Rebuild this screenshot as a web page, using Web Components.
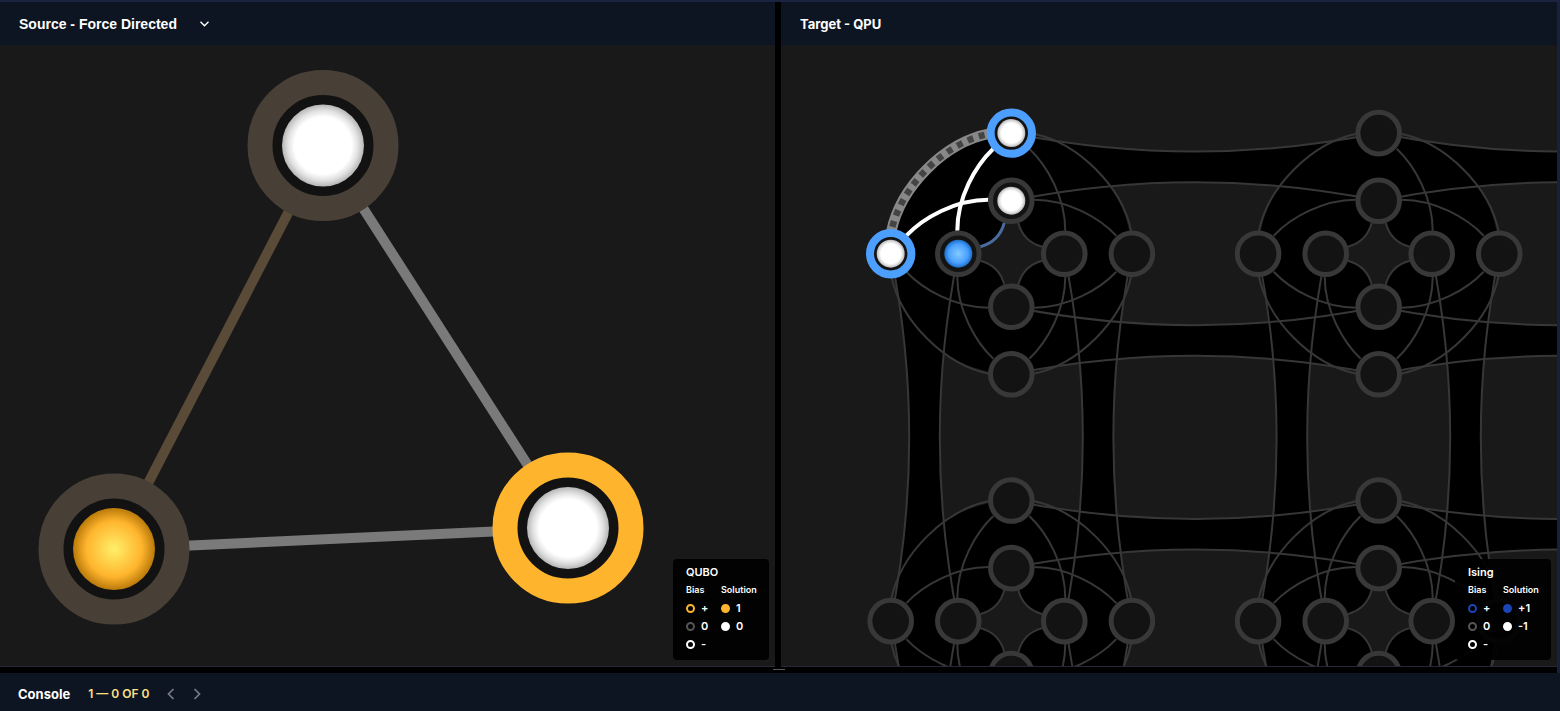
<!DOCTYPE html>
<html lang="en">
<head>
<meta charset="utf-8">
<title>Problem Inspector</title>
<style>
html, body { height: 100%; }
body { margin: 0; background: #000; color: #fff; font-family: Inter, "Liberation Sans", sans-serif; overflow: hidden; }
</style>
</head>
<body>
<inspector-app></inspector-app>
<script>
const make = (host, html) => {
  const t = document.createElement('template');
  t.innerHTML = html;
  host.attachShadow({ mode: 'open' }).append(t.content.cloneNode(true));
};

const ballDefs = `
  <radialGradient id="white"><stop offset="0" stop-color="#fff"/><stop offset=".7" stop-color="#fff"/><stop offset=".85" stop-color="#e2e2e2"/><stop offset="1" stop-color="#b6b6b6"/></radialGradient>
  <radialGradient id="gold"><stop offset="0" stop-color="#fff06a"/><stop offset=".68" stop-color="#ffb42d"/><stop offset="1" stop-color="#b97a0a"/></radialGradient>
  <radialGradient id="blue"><stop offset="0" stop-color="#82caff"/><stop offset=".68" stop-color="#4aa0ff"/><stop offset="1" stop-color="#1c6fc8"/></radialGradient>`;

/* A pane with a title bar, a drawing area and a legend in its corner. */
customElements.define('graph-pane', class extends HTMLElement {
  constructor() {
    super();
    make(this, `<style>
      :host { display: flex; flex-direction: column; min-width: 0; min-height: 0; }
      header { display: flex; align-items: center; height: 43px; padding: 0 19px; background: #0d1422; }
      .canvas { flex: 1; min-height: 0; display: grid; background: #191919; border-bottom: 1px solid #282738; position: relative; overflow: hidden; }
      .legend { position: absolute; right: 6px; bottom: 6px; }
    </style>
    <header><slot name="title"></slot></header>
    <div class="canvas"><slot></slot><div class="legend"><slot name="legend"></slot></div></div>`);
  }
});

customElements.define('layout-select', class extends HTMLElement {
  constructor() {
    super();
    make(this, `<style>
      :host { display: flex; align-items: center; gap: 23px; }
      select { appearance: none; border: 0; padding: 0; margin: 0; background: none; color: #fff; font: bold 14px/20px "Liberation Sans", Arial, sans-serif; }
      svg { display: block; pointer-events: none; }
    </style>
    <select aria-label="Source layout"><option>Source - Force Directed</option></select>
    <svg width="9" height="6" viewBox="0 0 9 6" fill="none" stroke="#fff" stroke-width="1.4"><path d="M.5.8 4.5 4.8 8.5.8"/></svg>`);
  }
});

customElements.define('pane-title', class extends HTMLElement {
  constructor() {
    super();
    make(this, `<style>
      :host { display: block; }
      h2 { margin: 0; font-size: 13px; line-height: 20px; font-weight: 700; }
    </style><h2><slot></slot></h2>`);
  }
});

/* Legend box: bias rings on the left, solution dots on the right. */
customElements.define('graph-legend', class extends HTMLElement {
  constructor() {
    super();
    const c = this.getAttribute('color');
    const [one, zero] = this.getAttribute('solutions').split(',');
    make(this, `<style>
      :host { display: block; box-sizing: border-box; width: 96px; padding: 4px 0 7px 13px; border-radius: 4px; background: rgba(0,0,0,.92); color: #fff; font-weight: 600; }
      h3, h4, ul { margin: 0; padding: 0; font-weight: 600; line-height: 18px; }
      h3 { font-size: 11px; }
      h4 { font-size: 9px; }
      .cols { display: grid; grid-template-columns: 35px 1fr; }
      ul { list-style: none; font-size: 11px; }
      li { display: flex; align-items: center; gap: 6px; height: 18px; }
      i { box-sizing: border-box; width: 9px; height: 9px; border-radius: 50%; border: 2px solid #fff; }
      .c { border-color: ${c}; }
      .n { border-color: #555; }
      .f { background: #fff; }
      .f.c { background: ${c}; }
    </style>
    <h3><slot></slot></h3>
    <div class="cols">
      <section><h4>Bias</h4><ul><li><i class="c"></i>+</li><li><i class="n"></i>0</li><li><i></i>-</li></ul></section>
      <section><h4>Solution</h4><ul><li><i class="f c"></i>${one}</li><li><i class="f"></i>${zero}</li></ul></section>
    </div>`);
  }
});

customElements.define('source-graph', class extends HTMLElement {
  constructor() {
    super();
    const nodes = [[323, 100.5, '#483f37', 'white'], [114, 504, '#483f37', 'gold'], [568, 483, '#ffb42d', 'white']];
    const edges = [[0, 1, '#5a4b38'], [0, 2, '#7a7a7a'], [1, 2, '#7a7a7a']];
    make(this, `<style>:host { display: block; min-height: 0; } svg { display: block; width: 100%; height: 100%; }</style>
    <svg role="img" aria-label="Source graph"><defs>${ballDefs}</defs>
    ${edges.map(([a, b, c]) => `<path d="M${nodes[a][0]} ${nodes[a][1]}L${nodes[b][0]} ${nodes[b][1]}" stroke="${c}" stroke-width="10"/>`).join('')}
    ${nodes.map(([x, y, c, b]) => `<circle cx="${x}" cy="${y}" r="63" fill="#121212" stroke="${c}" stroke-width="25"/><circle cx="${x}" cy="${y}" r="41" fill="url(#${b})"/>`).join('')}
    </svg>`);
  }
});

/* Grid of 4+4 qubit cells with couplers inside and between them. */
customElements.define('chimera-graph', class extends HTMLElement {
  constructor() {
    super();
    const X = 230.3, Y = 208.7, P = 367.4, COLS = 2, ROWS = 2;
    const offs = [-120.6, -53, 53, 120.6];
    const bend = [37, -37, 37, -37];
    let bands = '', disks = '', holes = '', lines = '', rings = '';
    const quad = (x, y, sx, sy) => {
      const p = (a, b) => `${x + a * sx} ${y + b * sy}`;
      return {
        outer: `M${p(-120, -22)}C${p(-111, -67)} ${p(-67, -111)} ${p(-22, -120)}`,
        flat: `M${p(-105, -18)}C${p(-88, -36)} ${p(-56, -54)} ${p(-23, -54)}`,
        tall: `M${p(-18, -105)}C${p(-36, -88)} ${p(-54, -56)} ${p(-54, -23)}`,
        inner: `M${p(-31, -7)}Q${p(-12, -12)} ${p(-7, -31)}`
      };
    };
    for (let r = 0; r < ROWS; r++) for (let c = 0; c < COLS; c++) {
      const x = X + c * P, y = Y + r * P;
      const h = i => [x, y + offs[i], x + P / 2, y + offs[i] + bend[i], x + P];
      const v = i => [y, x + offs[i], y + P / 2, x + offs[i] + bend[i], y + P];
      for (const i of [0, 2]) {
        let [a, b, m, n, e] = h(i), [, b2, , n2] = h(i + 1);
        bands += `<path d="M${a} ${b}Q${m} ${n} ${e} ${b}V${b2}Q${m} ${n2} ${a} ${b2}Z"/>`;
        [a, b, m, n, e] = v(i); [, b2, , n2] = v(i + 1);
        bands += `<path d="M${b} ${a}Q${n} ${m} ${b} ${e}H${b2}Q${n2} ${m} ${b2} ${a}Z"/>`;
      }
      for (let i = 0; i < 4; i++) {
        let [a, b, m, n, e] = h(i);
        lines += `<path d="M${a} ${b}Q${m} ${n} ${e} ${b}"/>`;
        [a, b, m, n, e] = v(i);
        lines += `<path d="M${b} ${a}Q${n} ${m} ${b} ${e}"/>`;
      }
      disks += `<circle cx="${x}" cy="${y}" r="120"/>`;
      holes += `<path d="M${x - 31} ${y - 7}Q${x - 12} ${y - 12} ${x - 7} ${y - 31}H${x + 7}Q${x + 12} ${y - 12} ${x + 31} ${y - 7}V${y + 7}Q${x + 12} ${y + 12} ${x + 7} ${y + 31}H${x - 7}Q${x - 12} ${y + 12} ${x - 31} ${y + 7}Z"/>`;
      for (const sx of [1, -1]) for (const sy of [1, -1]) {
        const q = quad(x, y, sx, sy), first = sx > 0 && sy > 0 && r === 0;
        if (first && c === 0) continue;
        for (const k in q) if (!(first && k === 'tall')) lines += `<path d="${q[k]}"/>`;
      }
      for (const o of offs) rings += `<circle cx="${x}" cy="${y + o}" r="20.8"/><circle cx="${x + o}" cy="${y}" r="20.8"/>`;
    }
    const q = quad(X, Y, 1, 1), O = offs[3];
    const ball = (x, y, b) => `<circle cx="${x}" cy="${y}" r="14" fill="url(#${b})"/>`;
    const hot = (x, y) => `<circle cx="${x}" cy="${y}" r="20.7" fill="#131313" stroke="#4c9fff" stroke-width="8"/>`;
    make(this, `<style>:host { display: block; min-height: 0; } svg { display: block; width: 100%; height: 100%; }</style>
    <svg role="img" aria-label="Target graph"><defs>${ballDefs}</defs>
    <g>${bands}${disks}</g><g fill="#191919">${holes}</g>
    <g fill="none" stroke="#373737" stroke-width="2">${lines}</g>
    <g fill="none"><path d="${q.outer}" stroke="#888" stroke-width="10.5"/><path d="${q.outer}" stroke="#444" stroke-width="6.5" stroke-dasharray="6 5.8" stroke-dashoffset="-5"/>
    <path d="${q.flat}" stroke="#fff" stroke-width="4"/><path d="${q.tall}" stroke="#fff" stroke-width="4"/><path d="${q.inner}" stroke="#4a6c9c" stroke-width="3"/></g>
    <g fill="#131313" stroke="#383838" stroke-width="5">${rings}</g>
    ${hot(X, Y - O)}${hot(X - O, Y)}
    ${ball(X, Y - O, 'white')}${ball(X - O, Y, 'white')}${ball(X, Y - 53, 'white')}${ball(X - 53, Y, 'blue')}
    </svg>`);
  }
});

customElements.define('console-bar', class extends HTMLElement {
  constructor() {
    super();
    make(this, `<style>
      :host { display: flex; align-items: center; height: 38px; padding: 4px 18px 0; box-sizing: border-box; background: #0d1422; }
      h2 { margin: 0 18px 0 0; font-size: 13px; line-height: 20px; font-weight: 700; }
      output { color: #ffe082; font-size: 12px; line-height: 20px; font-weight: 600; margin-right: 18px; }
      button { border: 0; padding: 0; margin: 0 18px 0 0; background: none; color: #777c88; display: block; }
      svg { display: block; }
    </style>
    <h2>Console</h2><output>1 — 0 OF 0</output>
    <button type="button" aria-label="Previous"><svg width="8" height="12" viewBox="0 0 8 12" fill="none" stroke="currentColor" stroke-width="1.7"><path d="M6.5 1 1.5 6l5 5"/></svg></button>
    <button type="button" aria-label="Next"><svg width="8" height="12" viewBox="0 0 8 12" fill="none" stroke="currentColor" stroke-width="1.7"><path d="m1.5 1 5 5-5 5"/></svg></button>`);
  }
});

customElements.define('inspector-app', class extends HTMLElement {
  constructor() {
    super();
    make(this, `<style>
      :host { display: flex; flex-direction: column; box-sizing: border-box; height: 100vh; border-top: 2px solid #1a2440; background: #000; }
      main { flex: 1; min-height: 0; display: grid; grid-template-columns: minmax(0, 775fr) 6px minmax(0, 776fr); border-right: 3px solid #18213a; }
      main > * { min-height: 0; }
      .split { box-sizing: border-box; height: 6px; padding-top: 2px; display: grid; justify-items: center; align-items: start; border-right: 3px solid #18213a; }
      .split::before { content: ""; width: 12px; height: 1px; background: #5a5a5a; }
    </style>
    <main>
      <graph-pane><layout-select slot="title"></layout-select><source-graph></source-graph>
        <graph-legend slot="legend" color="#ffb42d" solutions="1,0">QUBO</graph-legend></graph-pane>
      <div></div>
      <graph-pane><pane-title slot="title">Target - QPU</pane-title><chimera-graph></chimera-graph>
        <graph-legend slot="legend" color="#1a45b8" solutions="+1,-1">Ising</graph-legend></graph-pane>
    </main>
    <div class="split"></div>
    <console-bar></console-bar>`);
  }
});
</script>
</body>
</html>
